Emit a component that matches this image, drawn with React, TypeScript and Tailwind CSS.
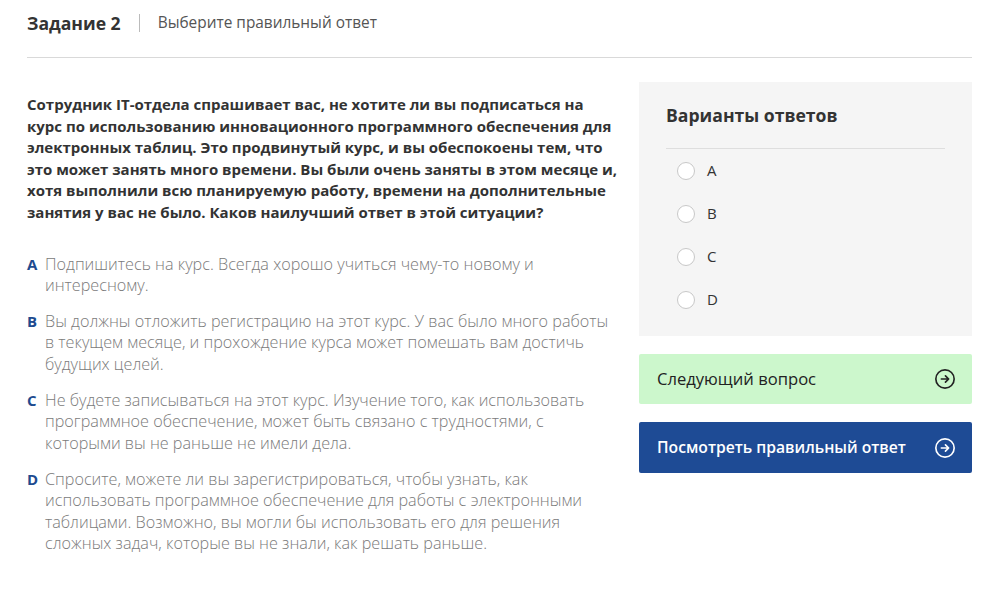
import React, { useState } from 'react';

const question = [
  'Сотрудник IT-отдела спрашивает вас, не хотите ли вы подписаться на',
  'курс по использованию инновационного программного обеспечения для',
  'электронных таблиц. Это продвинутый курс, и вы обеспокоены тем, что',
  'это может занять много времени. Вы были очень заняты в этом месяце и,',
  'хотя выполнили всю планируемую работу, времени на дополнительные',
  'занятия у вас не было. Каков наилучший ответ в этой ситуации?',
];

const answers = [
  { key: 'A', lines: ['Подпишитесь на курс. Всегда хорошо учиться чему-то новому и', 'интересному.'] },
  { key: 'B', lines: ['Вы должны отложить регистрацию на этот курс. У вас было много работы', 'в текущем месяце, и прохождение курса может помешать вам достичь', 'будущих целей.'] },
  { key: 'C', lines: ['Не будете записываться на этот курс. Изучение того, как использовать', 'программное обеспечение, может быть связано с трудностями, с', 'которыми вы не раньше не имели дела.'] },
  { key: 'D', lines: ['Спросите, можете ли вы зарегистрироваться, чтобы узнать, как', 'использовать программное обеспечение для работы с электронными', 'таблицами. Возможно, вы могли бы использовать его для решения', 'сложных задач, которые вы не знали, как решать раньше.'] },
];

const ArrowCircle: React.FC<{ className?: string }> = ({ className }) => (
  <svg className={className} width="22" height="22" viewBox="0 0 24 24" fill="none" stroke="currentColor" strokeWidth={1.8} strokeLinecap="round" strokeLinejoin="round">
    <circle cx="12" cy="12" r="10" />
    <path d="M8 12h8M12.5 8.5 16 12l-3.5 3.5" />
  </svg>
);

const App: React.FC = () => {
  const [selected, setSelected] = useState<string | null>(null);

  return (
    <div className="min-h-screen bg-white text-[#333] font-['Open_Sans',sans-serif]">
      <div className="pl-[27px] pr-[20px]">
        {/* Header */}
        <div className="flex items-center pt-[13px] pb-[24px] border-b border-[#d9d9d9]">
          <h1 className="text-[17.6px] font-bold text-[#333] leading-[20px]">Задание 2</h1>
          <span className="mx-[18px] w-px h-[18px] bg-[#bbb]" />
          <span className="text-[15.4px] text-[#555] leading-[20px]">Выберите правильный ответ</span>
        </div>

        <div className="flex gap-[24px] pt-[24px]">
          {/* Left col */}
          <div className="w-[588px] shrink-0 pt-[12px]">
            <p className="text-[15px] font-bold leading-[21.6px] text-[#333] whitespace-nowrap">
              {question.map((l, i) => (
                <React.Fragment key={i}>
                  {l}
                  {i < question.length - 1 && <br />}
                </React.Fragment>
              ))}
            </p>
            <div className="mt-[30px] flex flex-col gap-[15px]">
              {answers.map(a => (
                <div key={a.key} className="flex leading-[21.3px] whitespace-nowrap">
                  <span className="w-[18px] shrink-0 font-bold text-[15px] text-[#1e4b8f]">{a.key}</span>
                  <span className="text-[16.2px] text-[#7a7a7a] font-light">
                    {a.lines.map((l, i) => (
                      <React.Fragment key={i}>
                        {l}
                        {i < a.lines.length - 1 && <br />}
                      </React.Fragment>
                    ))}
                  </span>
                </div>
              ))}
            </div>
          </div>

          {/* Right col */}
          <div className="flex-1 flex flex-col gap-[18px]">
            <div className="bg-[#f5f5f5] px-[27px] pt-[21px] pb-[26px]">
              <h2 className="text-[17.6px] font-bold text-[#333] leading-[24px] pb-[21px] border-b border-[#dedede]">Варианты ответов</h2>
              <div className="flex flex-col gap-[22px] pt-[11px] pl-[11px]">
                {answers.map(a => (
                  <label key={a.key} className="flex items-center gap-[12px] h-[21px] cursor-pointer" onClick={() => setSelected(a.key)}>
                    <span className={`w-[18px] h-[18px] rounded-full border bg-white ${selected === a.key ? 'border-[#1e4b8f] border-[5px]' : 'border-[#c8c8c8]'}`} />
                    <span className="text-[15px] text-[#333]">{a.key}</span>
                  </label>
                ))}
              </div>
            </div>

            <button className="h-[50px] bg-[#ccf7cc] rounded-[2px] flex items-center justify-between pl-[18px] pr-[16px] text-[#222] text-[16.6px]">
              <span>Следующий вопрос</span>
              <ArrowCircle className="text-[#222]" />
            </button>

            <button className="h-[51px] bg-[#1e4b95] rounded-[2px] flex items-center justify-between pl-[18px] pr-[16px] text-white text-[15.7px] font-semibold">
              <span>Посмотреть правильный ответ</span>
              <ArrowCircle className="text-white" />
            </button>
          </div>
        </div>
      </div>
    </div>
  );
};

export default App;
